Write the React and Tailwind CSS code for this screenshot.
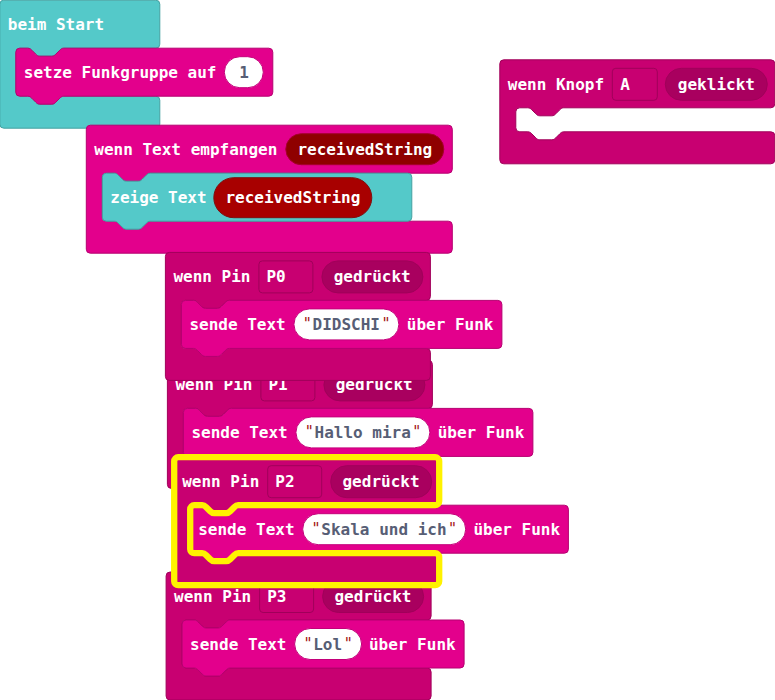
const NOTCH_RIGHT =
  'c2,0 3,1 4,2 l4,4 c1,1 2,2 4,2 h12 c2,0 3,-1 4,-2 l4,-4 c1,-1 2,-2 4,-2';
const NOTCH_LEFT =
  'c-2,0 -3,1 -4,2 l-4,4 c-1,1 -2,2 -4,2 h-12 c-2,0 -3,-1 -4,-2 l-4,-4 c-1,-1 -2,-2 -4,-2';

function statementPath(w) {
  return `M0,4 a4,4 0 0,1 4,-4 h8 ${NOTCH_RIGHT} H${w - 4} a4,4 0 0,1 4,4 V44 a4,4 0 0,1 -4,4 H48 ${NOTCH_LEFT} H4 a4,4 0 0,1 -4,-4 z`;
}

function eventPath(w, inner) {
  const b = 48 + inner;
  return `M0,4 a4,4 0 0,1 4,-4 H${w - 4} a4,4 0 0,1 4,4 V44 a4,4 0 0,1 -4,4 H64 ${NOTCH_LEFT} H20 a4,4 0 0,0 -4,4 V${b - 4} a4,4 0 0,0 4,4 h8 ${NOTCH_RIGHT} H${w - 4} a4,4 0 0,1 4,4 V${b + 28} a4,4 0 0,1 -4,4 H4 a4,4 0 0,1 -4,-4 z`;
}

const shapeColors = {
  teal: 'fill-[#54c9c9] stroke-[#43a1a1]',
  pink: 'fill-[#e3008c] stroke-[#b60070]',
  magenta: 'fill-[#c80071] stroke-[#a0005a]',
};

function Shape({ d, color }) {
  return (
    <svg className="absolute inset-0 h-full w-full overflow-visible">
      <path d={d} className={shapeColors[color]} strokeWidth="1" />
    </svg>
  );
}

function Label({ children }) {
  return <span className="pt-px">{children}</span>;
}

function Statement({ color = 'pink', width, children }) {
  return (
    <div className="relative ml-4 h-12" style={{ width }}>
      <Shape d={statementPath(width)} color={color} />
      <div className="relative flex h-full items-center gap-2 px-2">{children}</div>
    </div>
  );
}

function EventBlock({ x, y, width, color, inner = 48, selected, header, children }) {
  const d = eventPath(width, inner);
  return (
    <div
      className="absolute"
      style={{ transform: `translate(${x}px, ${y}px)`, width, height: inner + 80 }}
    >
      <Shape d={d} color={color} />
      <div className="relative flex h-12 items-center gap-2 px-2">{header}</div>
      {children}
      {selected && (
        <svg className="absolute inset-0 h-full w-full overflow-visible">
          <path d={d} className="fill-none stroke-[#fff200]" strokeWidth="6.3" strokeLinejoin="round" />
        </svg>
      )}
    </div>
  );
}

function Dropdown({ children, className }) {
  return (
    <span className={`flex h-[33px] shrink-0 items-center rounded border border-[#a0005a] pl-[7px] ${className}`}>
      <Label>{children}</Label>
    </span>
  );
}

function Pill({ children }) {
  return (
    <span className="-ml-[0.5px] flex h-[33px] w-[102.5px] shrink-0 items-center justify-center rounded-full border border-[#a0005a] bg-[#a9005f]">
      <Label>{children}</Label>
    </span>
  );
}

function TextValue({ children }) {
  return (
    <span className="-mr-[0.7px] -ml-[0.7px] flex h-8 shrink-0 items-center rounded-full border border-[#c4007a] bg-white pr-[6.5px] pl-2 text-[#575e75]">
      <span className="w-[10.5px] pb-px text-center text-[15px] font-normal text-[#a31515]">"</span>
      <Label>{children}</Label>
      <span className="w-3 pb-px text-center text-[15px] font-normal text-[#a31515]">"</span>
    </span>
  );
}

function PinBlock({ x, y, pin, text, childWidth, selected }) {
  return (
    <EventBlock
      x={x}
      y={y}
      width={265}
      color="magenta"
      selected={selected}
      header={
        <>
          <Label>wenn Pin</Label>
          <Dropdown className="w-[55px]">{pin}</Dropdown>
          <Pill>gedrückt</Pill>
        </>
      }
    >
      <Statement width={childWidth}>
        <Label>sende Text</Label>
        <TextValue>{text}</TextValue>
        <Label>über Funk</Label>
      </Statement>
    </EventBlock>
  );
}

export default function App() {
  return (
    <main className="relative h-[700px] w-[775px] overflow-hidden whitespace-pre bg-white font-['DejaVu_Sans_Mono',monospace] text-[16px] leading-6 font-bold text-white">
      <EventBlock x={-0.2} y={0.2} width={160} color="teal" header={<Label>beim Start</Label>}>
        <Statement width={257}>
          <Label>setze Funkgruppe auf</Label>
          <span className="-ml-[0.5px] flex h-8 w-10 shrink-0 items-center justify-center rounded-full border border-[#c4007a] bg-white text-[#575e75]">
            <Label>1</Label>
          </span>
        </Statement>
      </EventBlock>

      <EventBlock
        x={86.3}
        y={125.2}
        width={366}
        color="pink"
        header={
          <>
            <Label>wenn Text empfangen</Label>
            <span className="flex h-8 w-[159px] shrink-0 items-center justify-center rounded-full border border-[#a3002a] bg-[#8f0000]">
              <Label>receivedString</Label>
            </span>
          </>
        }
      >
        <Statement color="teal" width={309.5}>
          <Label>zeige Text</Label>
          <span className="-ml-[1.5px] flex h-[41px] w-[159.5px] shrink-0 items-center justify-center rounded-full border border-[#7d1010] bg-[#a80000]">
            <Label>receivedString</Label>
          </span>
        </Statement>
      </EventBlock>

      <EventBlock
        x={499.8}
        y={59.8}
        width={275}
        color="magenta"
        inner={24}
        header={
          <>
            <Label>wenn Knopf</Label>
            <Dropdown className="w-[45.5px]">A</Dropdown>
            <Pill>geklickt</Pill>
          </>
        }
      />

      <PinBlock x={167.4} y={360.4} pin="P1" text="Hallo mira" childWidth={349.5} />
      <PinBlock x={165.4} y={252.4} pin="P0" text="DIDSCHI" childWidth={320.5} />
      <PinBlock x={166.1} y={572} pin="P3" text="Lol" childWidth={282} />
      <PinBlock x={174.2} y={457.2} pin="P2" text="Skala und ich" childWidth={378.2} selected />
    </main>
  );
}
